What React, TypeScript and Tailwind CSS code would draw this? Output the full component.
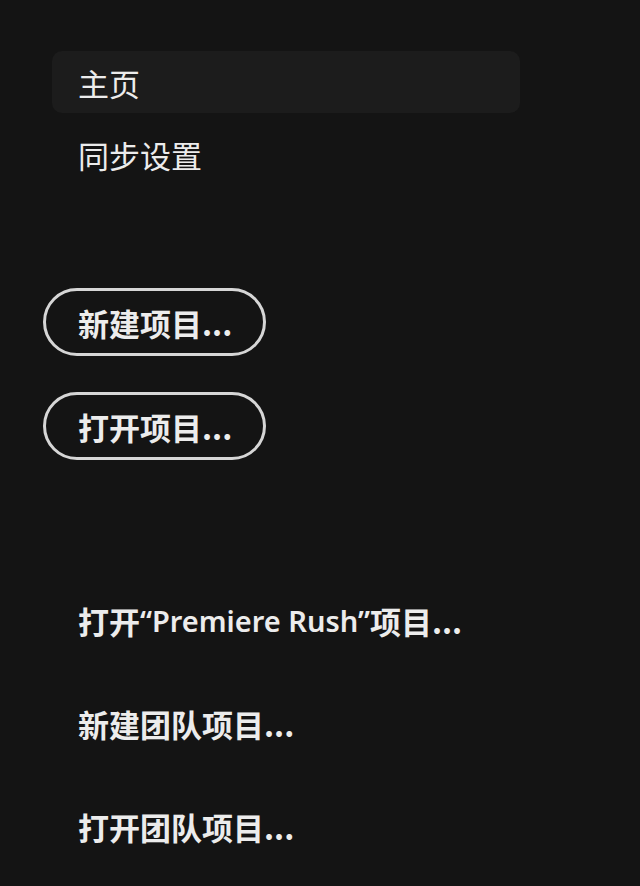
const font = { fontFamily: '"Noto Sans CJK SC", "Noto Sans", sans-serif' };
const latin = { fontFamily: '"Noto Sans", "Noto Sans CJK SC", sans-serif' };

function NavItem({ label, active }: { label: string; active?: boolean }) {
  return (
    <div
      className={`flex h-[62px] w-[468px] items-center rounded-[10px] pl-[26px] text-[31px] leading-none text-[#ececec] ${
        active ? "bg-[#1c1c1c]" : ""
      }`}
    >
      {label}
    </div>
  );
}

function PillButton({ label }: { label: string }) {
  return (
    <button className="flex h-[68px] w-[223px] items-center rounded-full border-[3px] border-[#d6d6d6] pl-[32px] text-[31px] font-bold leading-none text-[#ececec]">
      {label}
    </button>
  );
}

function LinkItem({ children }: { children: React.ReactNode }) {
  return (
    <div className="flex h-[40px] items-center pl-[78px] text-[31px] font-bold leading-none text-[#ececec]">
      {children}
    </div>
  );
}

export default function App() {
  return (
    <div className="min-h-[886px] w-[640px] bg-[#141414]" style={font}>
      <div className="flex flex-col gap-[10px] pl-[52px] pt-[51px]">
        <NavItem label="主页" active />
        <NavItem label="同步设置" />
      </div>

      <div className="mt-[103px] flex flex-col gap-[36px] pl-[43px]">
        <PillButton label="新建项目..." />
        <PillButton label="打开项目..." />
      </div>

      <div className="mt-[140px] flex flex-col gap-[63px]">
        <LinkItem>
          打开
          <span className="text-[29px] font-semibold" style={latin}>
            “Premiere Rush”
          </span>
          项目...
        </LinkItem>
        <LinkItem>新建团队项目...</LinkItem>
        <LinkItem>打开团队项目...</LinkItem>
      </div>
    </div>
  );
}
